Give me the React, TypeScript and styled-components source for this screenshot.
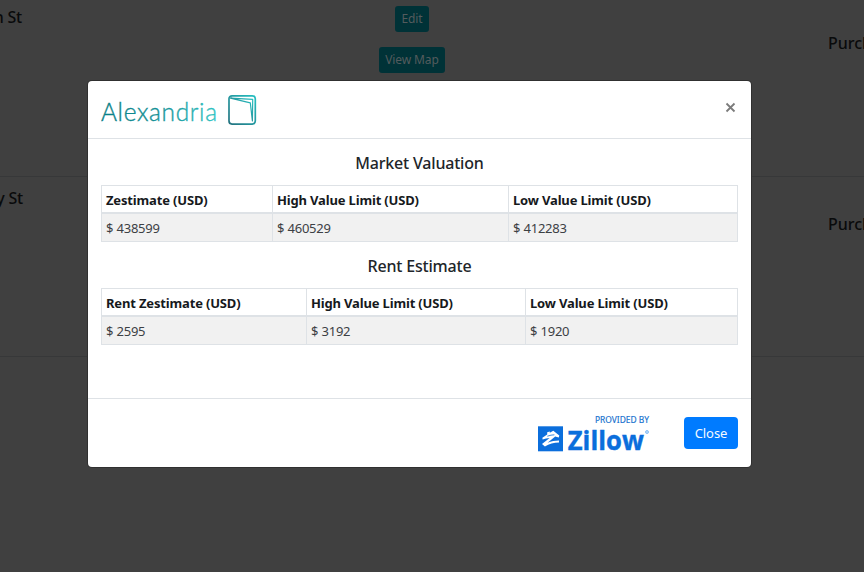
import React from "react";
import styled, { createGlobalStyle } from "styled-components";

const GlobalStyle = createGlobalStyle`
  *, *::before, *::after { box-sizing: border-box; }
  html, body { margin: 0; height: 100%; overflow: hidden; background: #404040; }
  body { font-family: "Noto Sans", "Open Sans", sans-serif; color: #212529; }
`;

const Screen = styled.div`
  position: relative;
  width: 864px;
  height: 572px;
  overflow: hidden;
  background: #404040;
`;

const Listing = styled.section<{ $height: number }>`
  display: grid;
  grid-template-columns: 312px 200px 1fr;
  height: ${(p) => p.$height}px;
  overflow: hidden;
  border-bottom: 1px solid #373839;
  color: #090a0b;
  font-size: 16px;
  font-weight: 500;
  line-height: 20px;
  white-space: nowrap;
`;

const Street = styled.div<{ $end: number; $top: number }>`
  display: flex;
  justify-content: flex-end;
  width: ${(p) => p.$end}px;
  padding-top: ${(p) => p.$top}px;
  letter-spacing: -0.2px;
`;

const Actions = styled.div`
  display: flex;
  flex-direction: column;
  align-items: center;
  gap: 15px;
  padding-top: 6px;
`;

const ListingButton = styled.button<{ $width: number }>`
  width: ${(p) => p.$width}px;
  height: 26px;
  padding: 0;
  border: 0;
  border-radius: 3px;
  background: #003237;
  color: #535b5d;
  font: 400 12px/26px "Noto Sans", sans-serif;
  letter-spacing: -0.1px;
`;

const Purchase = styled.div<{ $top: number }>`
  padding: ${(p) => p.$top}px 0 0 316px;
`;

const Dialog = styled.div`
  position: absolute;
  left: 88px;
  top: 81px;
  display: flex;
  flex-direction: column;
  width: 663px;
  height: 386px;
  border-radius: 4px;
  background: #fff;
  box-shadow: 0 0 0 1px #303030;
`;

const Header = styled.header`
  display: flex;
  justify-content: space-between;
  height: 58px;
  padding: 13px 14px 0 13px;
  border-bottom: 1px solid #dee2e6;
`;

const Dismiss = styled.button`
  display: flex;
  width: 13px;
  height: 13px;
  margin-top: 7px;
  padding: 0;
  border: 0;
  background: none;
`;

const Body = styled.main`
  display: flex;
  flex-direction: column;
  height: 259px;
  padding: 14px 13px 0;
`;

const Title = styled.h5`
  height: 20px;
  margin: 0 0 12px;
  color: #212529;
  font-size: 16px;
  font-weight: 500;
  line-height: 20px;
  letter-spacing: -0.2px;
  text-align: center;
`;

const Table = styled.table`
  width: 637px;
  margin-bottom: 14px;
  border-collapse: separate;
  border-spacing: 0;
  table-layout: fixed;
  border-left: 1px solid #dee2e6;
  border-top: 1px solid #dee2e6;
`;

const Col = styled.col<{ $width: number }>`
  width: ${(p) => p.$width}px;
`;

const HeadCell = styled.th`
  height: 28px;
  padding: 1px 0 0 4px;
  border-right: 1px solid #dee2e6;
  border-bottom: 2px solid #dee2e6;
  color: #16191c;
  font-size: 13px;
  font-weight: 700;
  line-height: 18px;
  letter-spacing: -0.16px;
  text-align: left;
  white-space: nowrap;
`;

const Cell = styled.td`
  height: 28px;
  padding: 0 0 0 4px;
  border-right: 1px solid #dee2e6;
  border-bottom: 1px solid #dee2e6;
  background: #f1f1f1;
  color: #3c4044;
  font-size: 13px;
  line-height: 18px;
  letter-spacing: -0.2px;
`;

const Footer = styled.footer`
  display: flex;
  justify-content: flex-end;
  align-items: flex-start;
  gap: 34px;
  flex: 1;
  padding: 15px 13px 0 0;
  border-top: 1px solid #dee2e6;
`;

const CloseButton = styled.button`
  width: 54px;
  height: 32px;
  margin-top: 3px;
  padding: 0;
  border: 0;
  border-radius: 4px;
  background: #007bff;
  color: #f4f9ff;
  font: 400 13px/32px "Noto Sans", sans-serif;
  letter-spacing: -0.1px;
`;

const AlexandriaLogo = () => (
  <svg width="158" height="34" viewBox="0 0 158 34" role="img" aria-label="Alexandria">
    <defs>
      <linearGradient id="word" gradientUnits="userSpaceOnUse" x1="0" y1="0" x2="116" y2="0">
        <stop offset="0" stopColor="#087f86" />
        <stop offset="0.5" stopColor="#159298" />
        <stop offset="1" stopColor="#2fc4c4" />
      </linearGradient>
      <linearGradient id="book" x1="0" y1="1" x2="1" y2="0">
        <stop offset="0" stopColor="#23727f" />
        <stop offset="1" stopColor="#25bfc1" />
      </linearGradient>
    </defs>
    <text x="0" y="27" fill="url(#word)" stroke="url(#word)" strokeWidth="0.35" fontFamily="Lato, sans-serif" fontWeight="300" fontSize="24.5" textLength="116" lengthAdjust="spacing">
      Alexandria
    </text>
    <g fill="none" stroke="url(#book)" strokeLinejoin="round">
      <rect x="128" y="1.8" width="26.3" height="28.3" rx="3" strokeWidth="1.7" />
      <path d="M129.5 4.2 151.7 5.4 151.4 27 149.3 8.8Z" strokeWidth="1.2" />
    </g>
  </svg>
);

const ZillowLogo = () => (
  <svg width="112" height="40" viewBox="0 0 112 40" role="img" aria-label="Provided by Zillow">
    <text x="57" y="9" fill="#1470ce" stroke="#1470ce" strokeWidth="0.15" fontFamily="Noto Sans, sans-serif" fontSize="8" textLength="54" lengthAdjust="spacingAndGlyphs">
      PROVIDED BY
    </text>
    <rect x="0" y="12.3" width="25" height="25" fill="#0b6edc" />
    <path
      d="M4.4 23.7 9.2 20.4V18.3L11.8 17.5V18.8L15.3 16.8 21.3 21.6 20.8 23.5 17.2 22.6 9.6 28.7C13.2 27.3 17 26.7 21 26.6V28.6C15.8 28.8 11.2 30 6.9 32.6L4 30 11.6 24C9.2 24.1 6.9 24.7 4.6 25.6Z"
      fill="#fff"
    />
    <path d="M9.3 22.2C11.9 21.3 14.2 20.8 16.4 20.8" fill="none" stroke="#0b6edc" strokeWidth="0.8" />
    <text x="29.8" y="35.7" fill="#0b6edc" stroke="#0b6edc" strokeWidth="0.4" fontFamily="Open Sans, sans-serif" fontWeight="700" fontSize="27.5" textLength="76" lengthAdjust="spacingAndGlyphs">
      Zillow
    </text>
    <circle cx="109" cy="18" r="1.5" fill="#b9dcfb" stroke="#75b5f2" strokeWidth="0.8" />
  </svg>
);

interface Column {
  label: string;
  value: string;
  width: number;
}

const market: Column[] = [
  { label: "Zestimate (USD)", value: "$ 438599", width: 171 },
  { label: "High Value Limit (USD)", value: "$ 460529", width: 236 },
  { label: "Low Value Limit (USD)", value: "$ 412283", width: 229 },
];

const rent: Column[] = [
  { label: "Rent Zestimate (USD)", value: "$ 2595", width: 205 },
  { label: "High Value Limit (USD)", value: "$ 3192", width: 219 },
  { label: "Low Value Limit (USD)", value: "$ 1920", width: 212 },
];

const Estimates = ({ columns }: { columns: Column[] }) => (
  <Table>
    <colgroup>
      {columns.map((c) => (
        <Col key={c.label} $width={c.width} />
      ))}
    </colgroup>
    <thead>
      <tr>
        {columns.map((c) => (
          <HeadCell key={c.label}>{c.label}</HeadCell>
        ))}
      </tr>
    </thead>
    <tbody>
      <tr>
        {columns.map((c) => (
          <Cell key={c.label}>{c.value}</Cell>
        ))}
      </tr>
    </tbody>
  </Table>
);

export default function App() {
  return (
    <Screen>
      <GlobalStyle />
      <Listing $height={177}>
        <Street $end={22} $top={7}>n St</Street>
        <Actions>
          <ListingButton $width={34}>Edit</ListingButton>
          <ListingButton $width={66}>View Map</ListingButton>
        </Actions>
        <Purchase $top={33}>Purch</Purchase>
      </Listing>
      <Listing $height={180}>
        <Street $end={23} $top={11}>y St</Street>
        <div />
        <Purchase $top={37}>Purch</Purchase>
      </Listing>
      <Dialog role="dialog">
        <Header>
          <AlexandriaLogo />
          <Dismiss aria-label="Close">
            <svg width="13" height="13" viewBox="0 0 13 13">
              <path d="M2.5 2.5 10.5 10.5M10.5 2.5 2.5 10.5" stroke="#7b7b7b" strokeWidth="1.8" />
            </svg>
          </Dismiss>
        </Header>
        <Body>
          <Title>Market Valuation</Title>
          <Estimates columns={market} />
          <Title>Rent Estimate</Title>
          <Estimates columns={rent} />
        </Body>
        <Footer>
          <ZillowLogo />
          <CloseButton>Close</CloseButton>
        </Footer>
      </Dialog>
    </Screen>
  );
}
